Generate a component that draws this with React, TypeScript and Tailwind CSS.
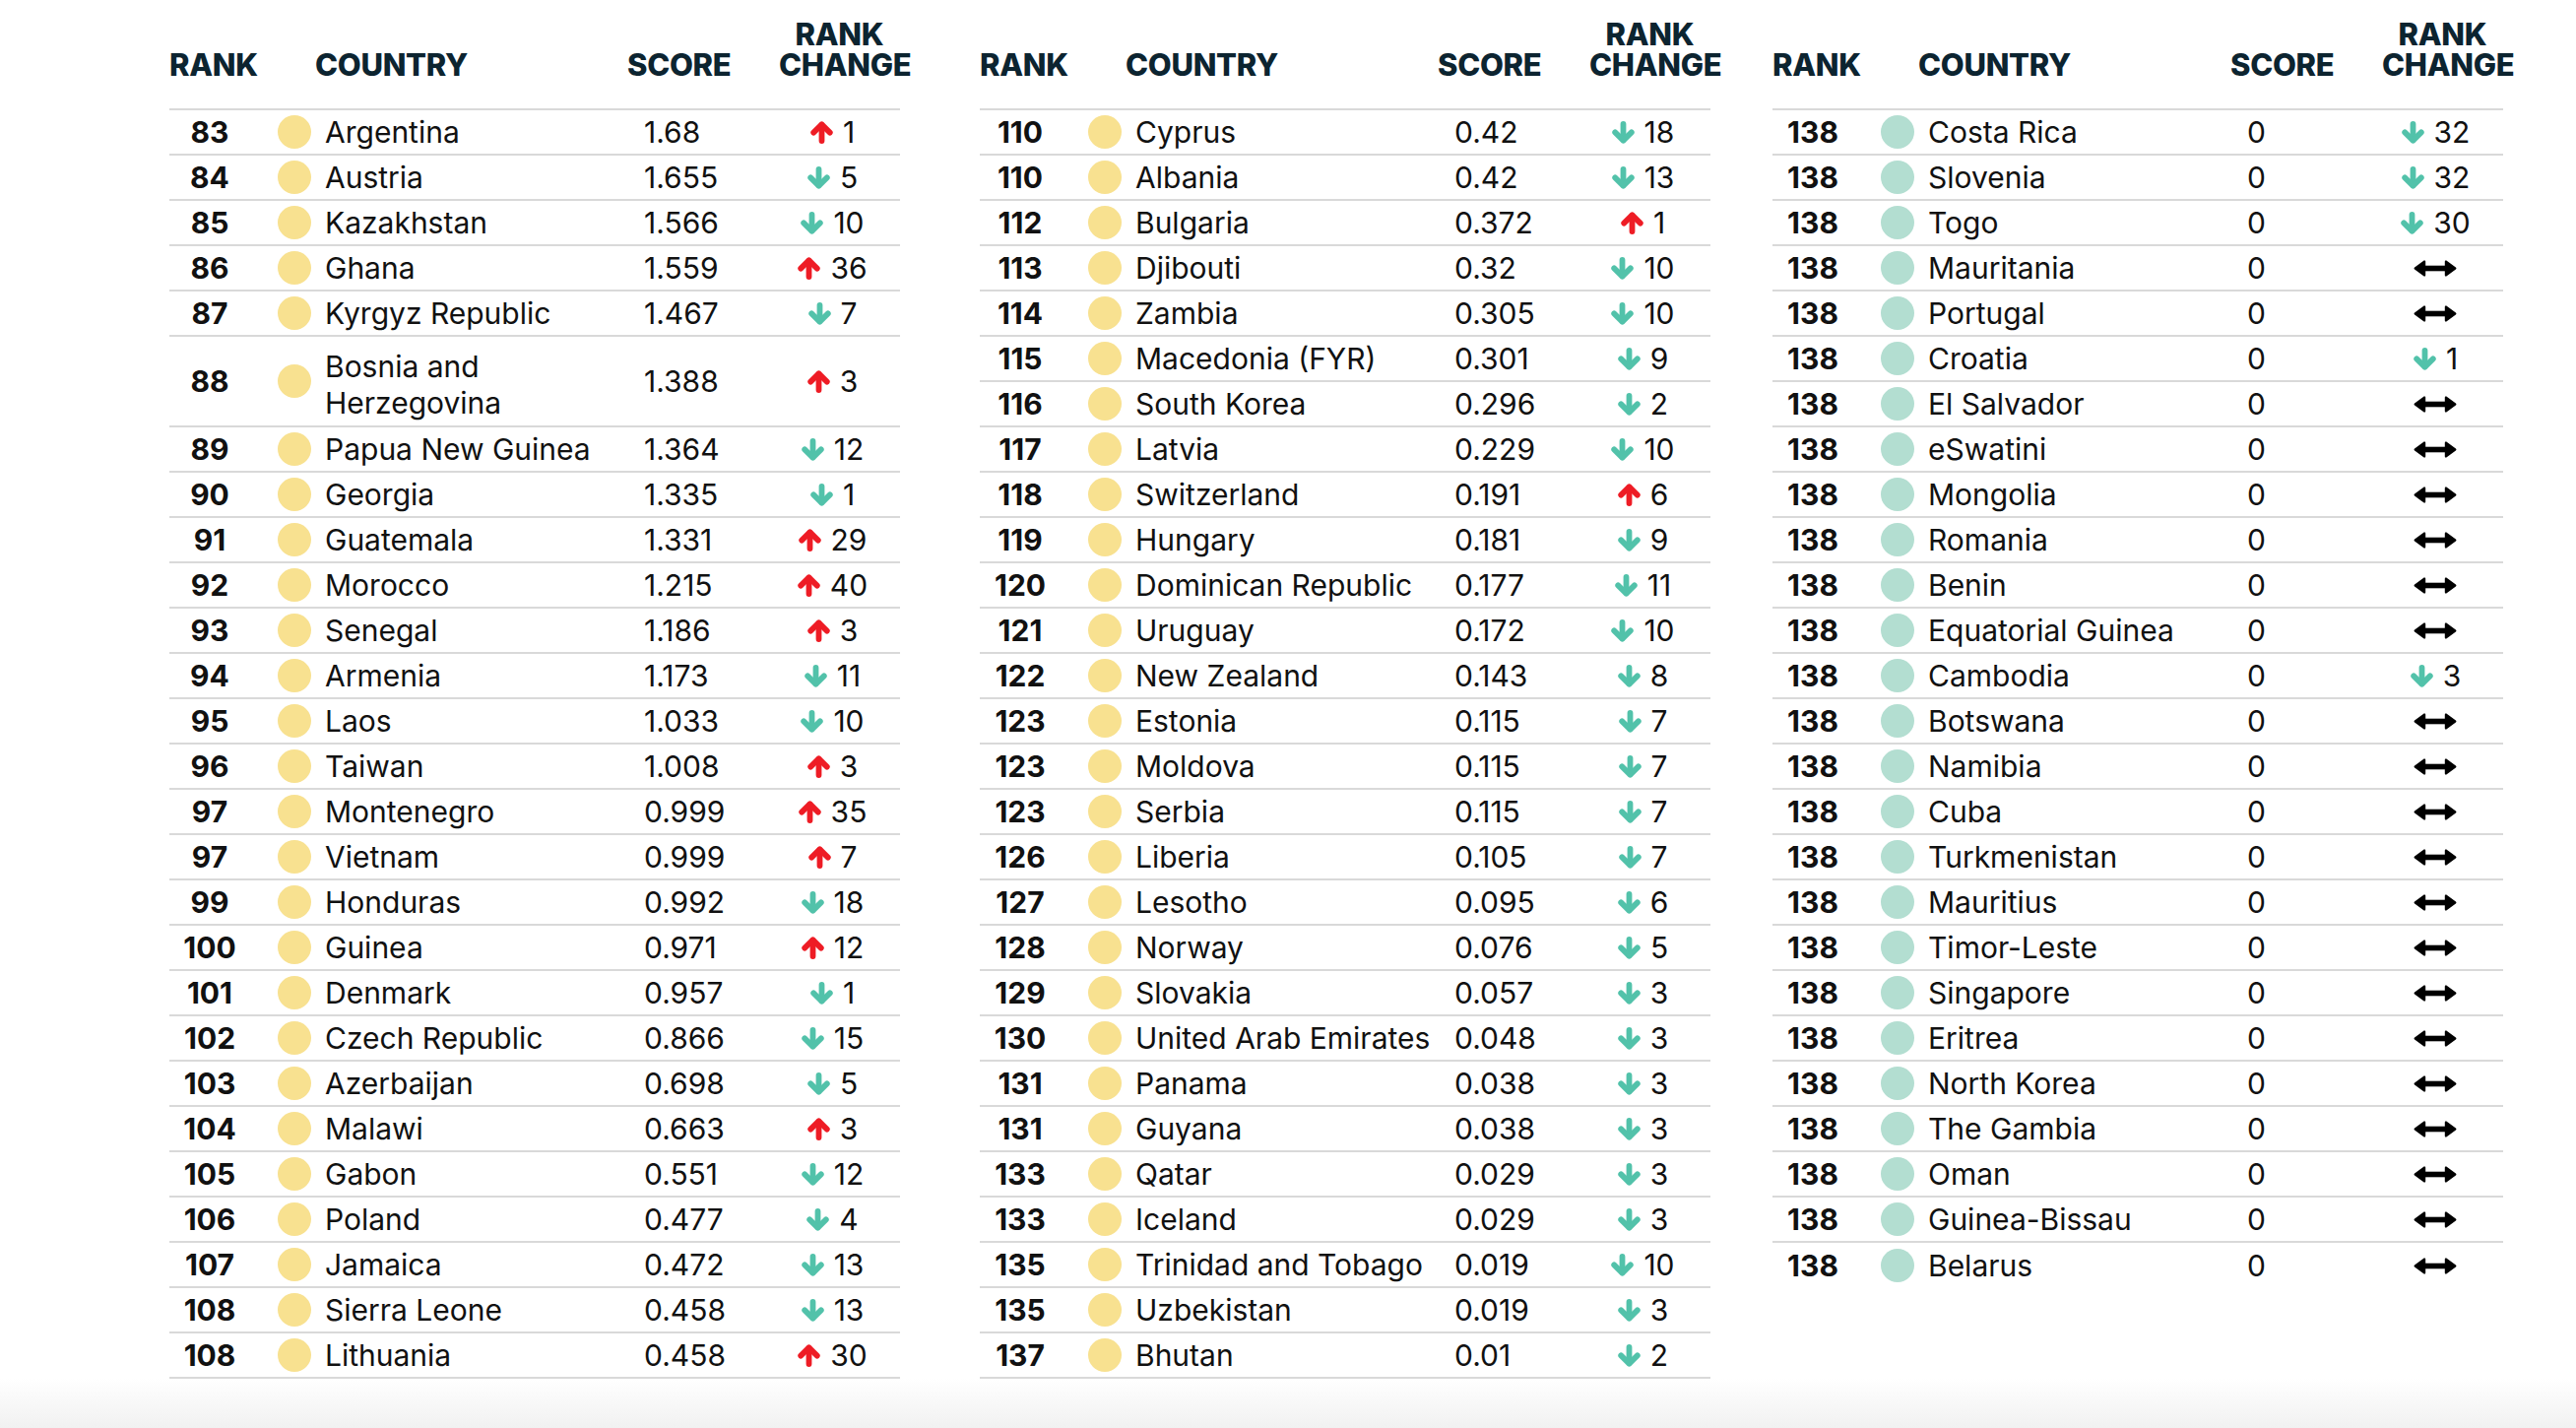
import React from 'react';

type Row = [string, string, string, string];

const col1: Row[] = [
  ['83', 'Argentina', '1.68', 'u1'],
  ['84', 'Austria', '1.655', 'd5'],
  ['85', 'Kazakhstan', '1.566', 'd10'],
  ['86', 'Ghana', '1.559', 'u36'],
  ['87', 'Kyrgyz Republic', '1.467', 'd7'],
  ['88', 'Bosnia and\nHerzegovina', '1.388', 'u3'],
  ['89', 'Papua New Guinea', '1.364', 'd12'],
  ['90', 'Georgia', '1.335', 'd1'],
  ['91', 'Guatemala', '1.331', 'u29'],
  ['92', 'Morocco', '1.215', 'u40'],
  ['93', 'Senegal', '1.186', 'u3'],
  ['94', 'Armenia', '1.173', 'd11'],
  ['95', 'Laos', '1.033', 'd10'],
  ['96', 'Taiwan', '1.008', 'u3'],
  ['97', 'Montenegro', '0.999', 'u35'],
  ['97', 'Vietnam', '0.999', 'u7'],
  ['99', 'Honduras', '0.992', 'd18'],
  ['100', 'Guinea', '0.971', 'u12'],
  ['101', 'Denmark', '0.957', 'd1'],
  ['102', 'Czech Republic', '0.866', 'd15'],
  ['103', 'Azerbaijan', '0.698', 'd5'],
  ['104', 'Malawi', '0.663', 'u3'],
  ['105', 'Gabon', '0.551', 'd12'],
  ['106', 'Poland', '0.477', 'd4'],
  ['107', 'Jamaica', '0.472', 'd13'],
  ['108', 'Sierra Leone', '0.458', 'd13'],
  ['108', 'Lithuania', '0.458', 'u30'],
];

const col2: Row[] = [
  ['110', 'Cyprus', '0.42', 'd18'],
  ['110', 'Albania', '0.42', 'd13'],
  ['112', 'Bulgaria', '0.372', 'u1'],
  ['113', 'Djibouti', '0.32', 'd10'],
  ['114', 'Zambia', '0.305', 'd10'],
  ['115', 'Macedonia (FYR)', '0.301', 'd9'],
  ['116', 'South Korea', '0.296', 'd2'],
  ['117', 'Latvia', '0.229', 'd10'],
  ['118', 'Switzerland', '0.191', 'u6'],
  ['119', 'Hungary', '0.181', 'd9'],
  ['120', 'Dominican Republic', '0.177', 'd11'],
  ['121', 'Uruguay', '0.172', 'd10'],
  ['122', 'New Zealand', '0.143', 'd8'],
  ['123', 'Estonia', '0.115', 'd7'],
  ['123', 'Moldova', '0.115', 'd7'],
  ['123', 'Serbia', '0.115', 'd7'],
  ['126', 'Liberia', '0.105', 'd7'],
  ['127', 'Lesotho', '0.095', 'd6'],
  ['128', 'Norway', '0.076', 'd5'],
  ['129', 'Slovakia', '0.057', 'd3'],
  ['130', 'United Arab Emirates', '0.048', 'd3'],
  ['131', 'Panama', '0.038', 'd3'],
  ['131', 'Guyana', '0.038', 'd3'],
  ['133', 'Qatar', '0.029', 'd3'],
  ['133', 'Iceland', '0.029', 'd3'],
  ['135', 'Trinidad and Tobago', '0.019', 'd10'],
  ['135', 'Uzbekistan', '0.019', 'd3'],
  ['137', 'Bhutan', '0.01', 'd2'],
];

const col3: Row[] = [
  ['Costa Rica', 'd32'],
  ['Slovenia', 'd32'],
  ['Togo', 'd30'],
  ['Mauritania', '='],
  ['Portugal', '='],
  ['Croatia', 'd1'],
  ['El Salvador', '='],
  ['eSwatini', '='],
  ['Mongolia', '='],
  ['Romania', '='],
  ['Benin', '='],
  ['Equatorial Guinea', '='],
  ['Cambodia', 'd3'],
  ['Botswana', '='],
  ['Namibia', '='],
  ['Cuba', '='],
  ['Turkmenistan', '='],
  ['Mauritius', '='],
  ['Timor-Leste', '='],
  ['Singapore', '='],
  ['Eritrea', '='],
  ['North Korea', '='],
  ['The Gambia', '='],
  ['Oman', '='],
  ['Guinea-Bissau', '='],
  ['Belarus', '='],
].map(([name, change]) => ['138', name, '0', change] as Row);

function Arrow({ up }: { up: boolean }) {
  return (
    <svg width="25" height="23" viewBox="0 0 25 23" className={up ? 'text-[#ee1c25]' : 'text-[#52c2aa]'}>
      <g
        fill="none"
        stroke="currentColor"
        strokeWidth="5.8"
        strokeLinecap="round"
        strokeLinejoin="round"
        transform={up ? undefined : 'rotate(180 12.5 11.5)'}
      >
        <path d="M12.5 20V4" />
        <path d="M4.2 11.6L12.5 3.4L20.8 11.6" />
      </g>
    </svg>
  );
}

function SameArrow() {
  return (
    <svg width="44" height="17" viewBox="0 0 44 17" className="text-black">
      <rect x="8" y="5.7" width="28" height="5.6" fill="currentColor" />
      <path d="M1.8 8.5L11 1.6V15.4Z" fill="currentColor" stroke="currentColor" strokeWidth="2.4" strokeLinejoin="round" />
      <path d="M42.2 8.5L33 1.6V15.4Z" fill="currentColor" stroke="currentColor" strokeWidth="2.4" strokeLinejoin="round" />
    </svg>
  );
}

function Change({ value }: { value: string }) {
  if (value === '=') return <SameArrow />;
  return (
    <>
      <Arrow up={value[0] === 'u'} />
      <span>{value.slice(1)}</span>
    </>
  );
}

function RankTable({ rows, dot, lastBorder = true }: { rows: Row[]; dot: string; lastBorder?: boolean }) {
  return (
    <div className="w-[742px] shrink-0">
      <div className="flex items-end h-[112px] pb-[29px] border-b-2 border-[#d9d9d9] text-[31px] leading-[31px] font-extrabold text-[#0c2430] uppercase tracking-[-0.3px]">
        <div className="w-[148px]">Rank</div>
        <div className="w-[317px]">Country</div>
        <div className="w-[154px]">Score</div>
        <div className="w-[123px] text-center whitespace-nowrap">
          <div>Rank</div>
          <div>Change</div>
        </div>
      </div>
      {rows.map(([rank, name, score, change], i) => {
        const wrapped = name.includes('\n');
        const last = i === rows.length - 1;
        return (
          <div
            key={rank + name}
            className={`flex items-center ${wrapped ? 'h-[92px]' : 'h-[46px]'} ${
              last && !lastBorder ? '' : 'border-b-2 border-[#d9d9d9]'
            } text-[30px] leading-none text-[#111]`}
          >
            <div className="w-[96px] pr-[14px] text-center font-bold">{rank}</div>
            <div className="w-[62px] flex justify-center">
              <div className={`w-[34px] h-[34px] rounded-full ${dot}`} />
            </div>
            <div className={`w-[306px] ${wrapped ? 'whitespace-pre-line leading-[37px] pt-[8px]' : 'whitespace-nowrap'}`}>
              {name}
            </div>
            <div className="w-[154px] pl-[18px]">{score}</div>
            <div className="w-[124px] pr-[14px] flex items-center justify-center gap-[9px]">
              <Change value={change} />
            </div>
          </div>
        );
      })}
    </div>
  );
}

export default function App() {
  return (
    <div className="w-[2616px] h-[1450px] flex flex-col bg-white font-['Inter','Liberation_Sans',sans-serif]">
      <div className="flex-1 flex items-start pl-[172px]">
        <RankTable rows={col1} dot="bg-[#f8e190]" />
        <div className="ml-[81px]">
          <RankTable rows={col2} dot="bg-[#f8e190]" />
        </div>
        <div className="ml-[63px]">
          <RankTable rows={col3} dot="bg-[#b3ded1]" lastBorder={false} />
        </div>
      </div>
      <div className="h-[56px] bg-linear-to-b from-white to-[#f1f1f1]" />
    </div>
  );
}
